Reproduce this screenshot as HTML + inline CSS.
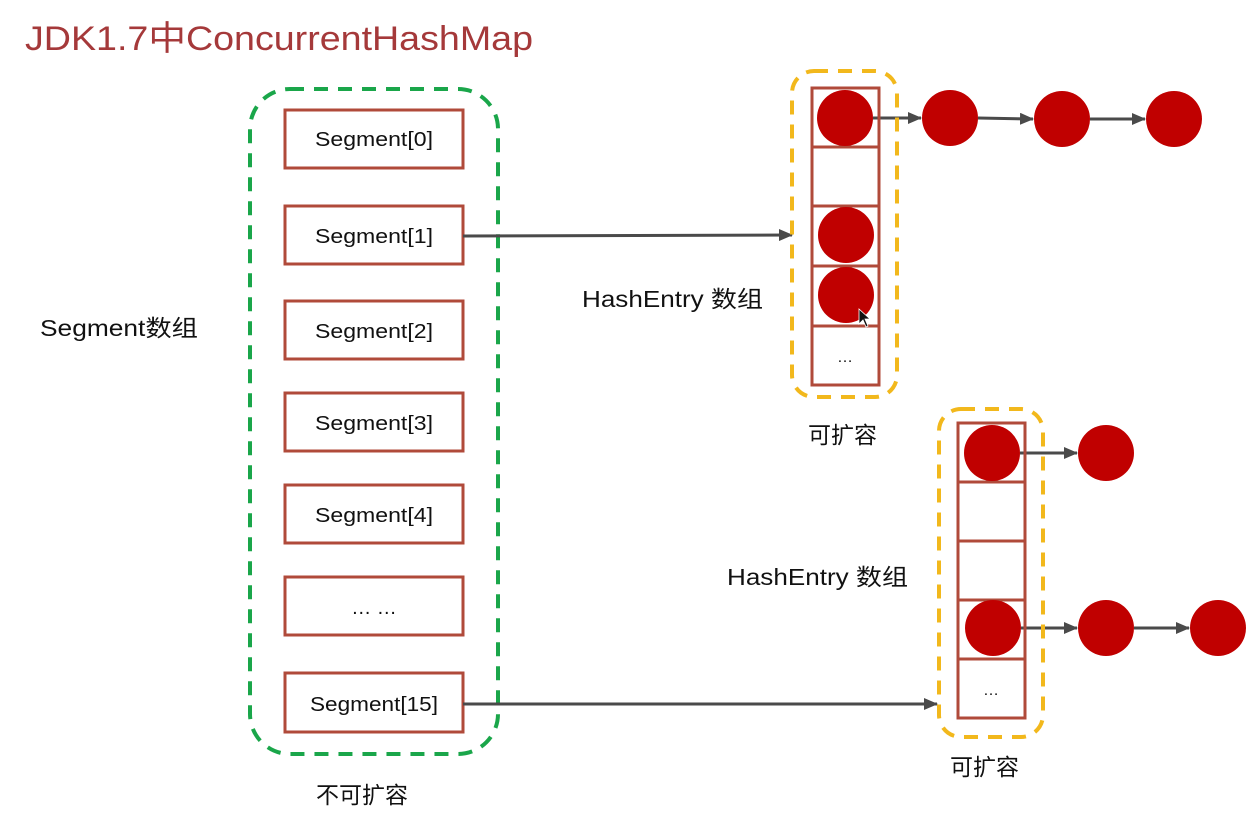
<!DOCTYPE html>
<html><head><meta charset="utf-8"><style>
html,body{margin:0;padding:0;background:#fff;}
svg{display:block;}
text{font-family:"Liberation Sans","Noto Sans CJK SC",sans-serif;}
</style></head><body>
<svg width="1259" height="815" viewBox="0 0 1259 815" xmlns="http://www.w3.org/2000/svg">
<defs>
<marker id="ah" markerWidth="14" markerHeight="12" refX="13" refY="6" orient="auto" markerUnits="userSpaceOnUse" viewBox="0 0 14 12">
<path d="M0,0 L14,6 L0,12 z" fill="#4a4a4a"/>
</marker>
</defs>
<text x="25" y="50" font-size="34" fill="#a5393a" textLength="508" lengthAdjust="spacingAndGlyphs">JDK1.7中ConcurrentHashMap</text>

<rect x="250" y="89" width="248" height="665" rx="40" fill="none" stroke="#1aa64a" stroke-width="4" stroke-dasharray="14 10"/>

<g fill="#fff" stroke="#b04a3a" stroke-width="3">
<rect x="285" y="110" width="178" height="58"/>
<rect x="285" y="206" width="178" height="58"/>
<rect x="285" y="301" width="178" height="58"/>
<rect x="285" y="393" width="178" height="58"/>
<rect x="285" y="485" width="178" height="58"/>
<rect x="285" y="577" width="178" height="58"/>
<rect x="285" y="673" width="178" height="59"/>
</g>
<g font-size="20" fill="#111" text-anchor="middle">
<text x="374" y="146" textLength="118" lengthAdjust="spacingAndGlyphs">Segment[0]</text>
<text x="374" y="243" textLength="118" lengthAdjust="spacingAndGlyphs">Segment[1]</text>
<text x="374" y="338" textLength="118" lengthAdjust="spacingAndGlyphs">Segment[2]</text>
<text x="374" y="430" textLength="118" lengthAdjust="spacingAndGlyphs">Segment[3]</text>
<text x="374" y="522" textLength="118" lengthAdjust="spacingAndGlyphs">Segment[4]</text>
<text x="374" y="614">… …</text>
<text x="374" y="711" textLength="128" lengthAdjust="spacingAndGlyphs">Segment[15]</text>
</g>

<g stroke="#4a4a4a" stroke-width="3" fill="none" marker-end="url(#ah)">
<line x1="463" y1="236" x2="792" y2="235"/>
<line x1="463" y1="704" x2="937" y2="704"/>
<line x1="873" y1="118" x2="921" y2="118"/>
<line x1="978" y1="118" x2="1033" y2="119"/>
<line x1="1090" y1="119" x2="1145" y2="119"/>
<line x1="1020" y1="453" x2="1077" y2="453"/>
<line x1="1021" y1="628" x2="1077" y2="628"/>
<line x1="1134" y1="628" x2="1189" y2="628"/>
</g>

<g font-size="23" fill="#111">
<text x="40" y="336" textLength="158" lengthAdjust="spacingAndGlyphs">Segment数组</text>
<text x="582" y="307" textLength="181" lengthAdjust="spacingAndGlyphs">HashEntry 数组</text>
<text x="727" y="585" textLength="181" lengthAdjust="spacingAndGlyphs">HashEntry 数组</text>
<text x="808" y="443">可扩容</text>
<text x="950" y="775">可扩容</text>
<text x="316" y="803">不可扩容</text>
</g>

<rect x="792" y="71" width="105" height="326" rx="22" fill="none" stroke="#f2b81c" stroke-width="4" stroke-dasharray="14 10"/>
<g fill="none" stroke="#b04a3a" stroke-width="3">
<rect x="812" y="88" width="67" height="297"/>
<line x1="812" y1="147" x2="879" y2="147"/>
<line x1="812" y1="206" x2="879" y2="206"/>
<line x1="812" y1="266" x2="879" y2="266"/>
<line x1="812" y1="326" x2="879" y2="326"/>
</g>
<text x="845" y="362" font-size="16" text-anchor="middle" fill="#111">…</text>
<rect x="939" y="409" width="104" height="328" rx="22" fill="none" stroke="#f2b81c" stroke-width="4" stroke-dasharray="14 10"/>
<g fill="none" stroke="#b04a3a" stroke-width="3">
<rect x="958" y="423" width="67" height="295"/>
<line x1="958" y1="482" x2="1025" y2="482"/>
<line x1="958" y1="541" x2="1025" y2="541"/>
<line x1="958" y1="600" x2="1025" y2="600"/>
<line x1="958" y1="659" x2="1025" y2="659"/>
</g>
<text x="991" y="695" font-size="16" text-anchor="middle" fill="#111">…</text>

<g fill="#c00000">
<circle cx="845" cy="118" r="28"/>
<circle cx="846" cy="235" r="28"/>
<circle cx="846" cy="295" r="28"/>
<circle cx="950" cy="118" r="28"/>
<circle cx="1062" cy="119" r="28"/>
<circle cx="1174" cy="119" r="28"/>
<circle cx="992" cy="453" r="28"/>
<circle cx="993" cy="628" r="28"/>
<circle cx="1106" cy="453" r="28"/>
<circle cx="1106" cy="628" r="28"/>
<circle cx="1218" cy="628" r="28"/>
</g>
<path d="M859,309 L859,324 L863,320 L866,327 L868,326 L865,319 L870,319 z" fill="#111" stroke="#fff" stroke-width="0.8"/>
</svg>
</body></html>
